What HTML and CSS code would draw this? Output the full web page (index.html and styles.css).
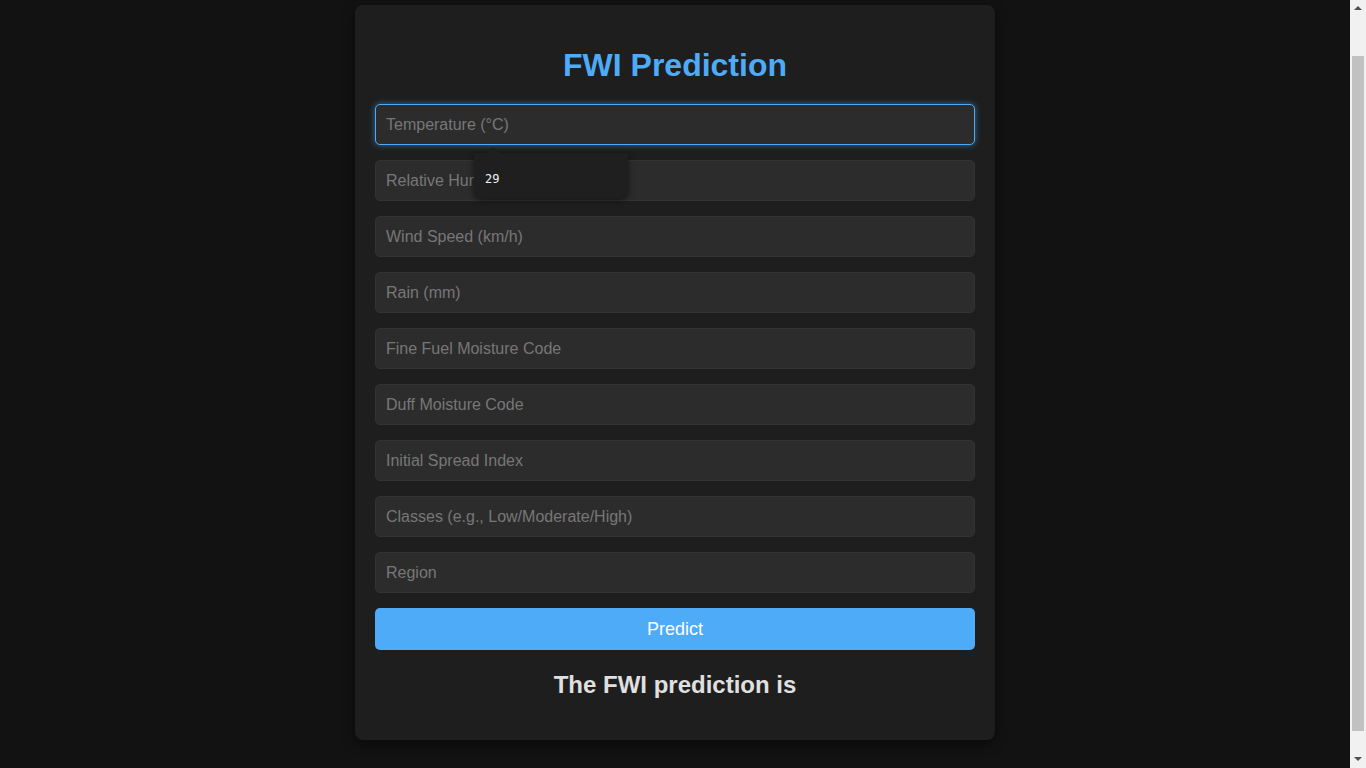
FILE: index.html
```html
<!DOCTYPE html>
<html lang="en">
<head>
<meta charset="UTF-8">
<title>FWI Prediction</title>
<link rel="stylesheet" href="styles.css">
</head>
<body>
<div class="card">
  <h1 class="title">FWI Prediction</h1>
  <form class="form" onsubmit="return false;">
    <div class="field">
      <input class="input is-focused" type="text" placeholder="Temperature (°C)">
      <div class="suggest">
        <div class="suggest-item">29</div>
      </div>
    </div>
    <input class="input" type="text" placeholder="Relative Humidity (%)">
    <input class="input" type="text" placeholder="Wind Speed (km/h)">
    <input class="input" type="text" placeholder="Rain (mm)">
    <input class="input" type="text" placeholder="Fine Fuel Moisture Code">
    <input class="input" type="text" placeholder="Duff Moisture Code">
    <input class="input" type="text" placeholder="Initial Spread Index">
    <input class="input" type="text" placeholder="Classes (e.g., Low/Moderate/High)">
    <input class="input" type="text" placeholder="Region">
    <button class="btn" type="submit">Predict</button>
  </form>
  <h2 class="result">The FWI prediction is</h2>
</div>
<div class="scrollbar" aria-hidden="true">
  <div class="sb-arrow sb-up"></div>
  <div class="sb-track"><div class="sb-thumb"></div></div>
  <div class="sb-arrow sb-down"></div>
</div>
<script src="script.js"></script>
</body>
</html>
```

FILE: styles.css
```css
html, body {
  margin: 0;
  padding: 0;
}
body {
  background: #121212;
  font-family: "Liberation Sans", Arial, sans-serif;
  color: #e0e0e0;
  padding: 50px 16px 50px 0;
}
.card {
  width: 640px;
  box-sizing: border-box;
  margin: 0 auto;
  background: #1e1e1e;
  border-radius: 8px;
  padding: 20px 20px 22px;
  box-shadow: 0 4px 12px rgba(0, 0, 0, 0.5);
}
.title {
  margin: 22px 0 20px;
  font-size: 32px;
  line-height: 37px;
  font-weight: bold;
  color: #4dabf7;
  text-align: center;
}
.form {
  display: flex;
  flex-direction: column;
  gap: 15px;
}
.field {
  position: relative;
}
.input {
  display: block;
  width: 100%;
  height: 41px;
  box-sizing: border-box;
  padding: 10px;
  font-family: "Liberation Sans", Arial, sans-serif;
  font-size: 16px;
  color: #e0e0e0;
  background: #2c2c2c;
  border: 1px solid #333;
  border-radius: 5px;
  outline: none;
}
.input::placeholder {
  color: #777;
}
.input.is-focused {
  border-color: #4dabf7;
  box-shadow: 0 0 6px rgba(77, 171, 247, 0.55);
  caret-color: #e0e0e0;
}
.suggest {
  position: absolute;
  left: 99px;
  top: 49px;
  width: 154px;
  height: 45px;
  background: #1f1f1f;
  border-radius: 0 0 8px 8px;
  box-shadow: 0 2px 6px rgba(0, 0, 0, 0.55);
  z-index: 5;
}
.suggest::before {
  content: "";
  position: absolute;
  left: 12px;
  top: -6px;
  width: 0;
  height: 0;
  border-left: 7px solid transparent;
  border-right: 7px solid transparent;
  border-bottom: 6px solid #1f1f1f;
}
.suggest-item {
  padding: 19px 0 0 11px;
  font-family: "DejaVu Sans Mono", monospace;
  font-size: 12px;
  line-height: 14px;
  color: #f2f2f2;
}
.btn {
  display: block;
  width: 100%;
  height: 42px;
  border: none;
  border-radius: 5px;
  background: #4dabf7;
  color: #fff;
  font-family: "Liberation Sans", Arial, sans-serif;
  font-size: 18px;
  cursor: pointer;
}
.result {
  margin: 21px 0 19px;
  font-size: 24px;
  line-height: 28px;
  font-weight: bold;
  color: #e0e0e0;
  text-align: center;
}
.scrollbar {
  position: fixed;
  top: 0;
  right: 0;
  bottom: 0;
  width: 16px;
  background: #f1f1f1;
  display: flex;
  flex-direction: column;
  z-index: 10;
}
.sb-arrow {
  height: 17px;
  flex: none;
  position: relative;
}
.sb-up::before,
.sb-down::before {
  content: "";
  position: absolute;
  left: 4px;
  top: 6px;
  width: 0;
  height: 0;
  border-left: 4px solid transparent;
  border-right: 4px solid transparent;
}
.sb-up::before {
  border-bottom: 4px solid #505050;
}
.sb-down::before {
  border-top: 4px solid #505050;
}
.sb-track {
  flex: 1;
  padding: 39px 2px 0 2px;
}
.sb-thumb {
  height: 675px;
  background: #c1c1c1;
}
```

FILE: script.js
```js
window.scrollTo(0, 45);
document.querySelector('.is-focused').focus({ preventScroll: true });
```
